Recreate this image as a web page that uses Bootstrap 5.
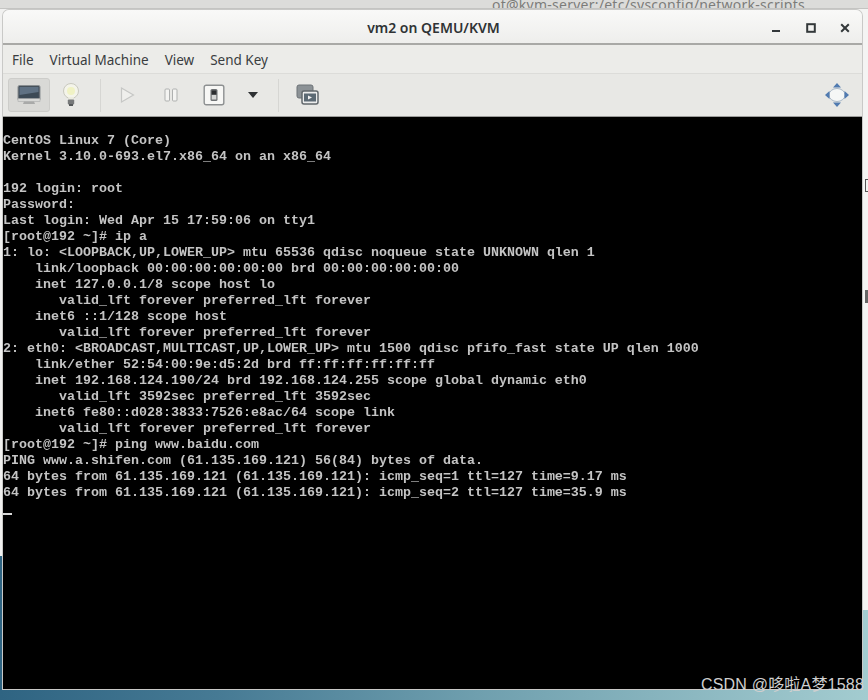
<!DOCTYPE html>
<html lang="en">
<head>
<meta charset="utf-8">
<title>vm2 on QEMU/KVM</title>
<link href="https://cdn.jsdelivr.net/npm/bootstrap@5.3.0/dist/css/bootstrap.min.css" rel="stylesheet">
<style>
html,body{height:100%;margin:0;overflow:hidden}
.desk{position:relative;width:868px;height:700px;overflow:hidden;background:linear-gradient(90deg,#2f6482 0,#467a94 25%,#6f9fae 55%,#a3ccd0 100%);font-family:"Liberation Sans",sans-serif}
.back-win{position:absolute;left:0;top:0;width:868px;height:556px;background:#f1f1f0}
.back-right{position:absolute;right:0;top:0;width:10px;height:610px;background:#f4f4f3}
.back-head{position:absolute;left:0;top:0;width:868px;height:9px;background:#dcdcda;border-bottom:1px solid #c4c4c2;overflow:hidden}
.back-title{position:absolute;left:492px;top:-5px;font:14px/19px "Noto Sans",sans-serif;color:#7c7c7a;white-space:nowrap;letter-spacing:.25px}
.tick-a{position:absolute;left:865px;top:179px;width:3px;height:13px;border:1px solid #555;border-right:0}
.tick-b{position:absolute;left:865px;top:290px;width:3px;height:13px;background:#666}
.vm-win{position:absolute;left:3px;top:10px;width:859px;height:679px;display:flex;flex-direction:column;border-radius:6px 6px 0 0;overflow:hidden;background:#e8e8e6;box-shadow:0 0 0 1px #c9c9c7}
.vm-title{height:35px;flex:none;background:linear-gradient(#f9f9f8,#eeeeec);border-bottom:2px solid #a9a9a6;font:600 14px "Noto Sans",sans-serif;color:#2f3335;position:relative;padding:1px 0 0 2px}
.win-btn{position:absolute;top:1px;height:33px;display:flex;align-items:center}
.btn-min{left:767px}.btn-max{left:802px}.btn-cls{left:836px}
.vm-menu{height:29px;flex:none;background:#ecece9;border-bottom:1px solid #dcdcd9;font:13.5px "Noto Sans",sans-serif;color:#3a3d3f;padding:2px 0 0 9px;gap:16px;align-items:center}
.vm-tools{height:43px;flex:none;background:#e8e8e5;align-items:center;padding-left:5px;position:relative;border-bottom:1px solid #9c9c9a}
.tool{width:42px;height:34px;display:flex;align-items:center;justify-content:center;flex:none}
.tool-on{background:#d9d9d6;border:1px solid #cdcdca;border-radius:3px}
.tool-sep{width:1px;height:33px;background:#d6d6d3;flex:none}
.sep-one{margin:0 5px 0 8px}.sep-two{margin:0 7px 0 6px}
.tool-pause{width:46px}.tool-box{width:40px}.tool-caret{width:38px}
.nav-icon{margin:0 12px 0 auto;display:flex}
.screen{flex:1 1 auto;background:#000;color:#c4c4c4;font:700 13.33px/16px "Liberation Mono",monospace;padding:16px 0 0 0;white-space:pre;filter:blur(.6px);margin:0;overflow:hidden}
.cur-bar{display:inline-block;width:9px;height:2px;background:#d8d8d8;vertical-align:-3px}
.wm-text{position:absolute;right:4px;bottom:5px;font:16px/20px "Liberation Sans","Noto Sans CJK SC",sans-serif;color:#cfcfcf;white-space:nowrap;letter-spacing:.2px}
</style>
</head>
<body>
<div class="desk">
  <div class="back-win"></div>
  <div class="back-right"></div>
  <div class="back-head"><span class="back-title">ot@kvm-server:/etc/sysconfig/network-scripts</span></div>
  <div class="tick-a"></div>
  <div class="tick-b"></div>
  <div class="vm-win">
    <div class="vm-title d-flex align-items-center justify-content-center">
      <span>vm2 on QEMU/KVM</span>
      <span class="win-btn btn-min"><svg width="12" height="12" viewBox="0 0 12 12"><rect x="2" y="8" width="8" height="2" fill="#33383a"/></svg></span>
      <span class="win-btn btn-max"><svg width="12" height="12" viewBox="0 0 12 12"><rect x="2.200" y="2.200" width="7.600" height="7.600" fill="none" stroke="#33383a" stroke-width="2"/></svg></span>
      <span class="win-btn btn-cls"><svg width="12" height="12" viewBox="0 0 12 12"><path d="M2.200 2.200 9.800 9.800M9.800 2.200 2.200 9.800" stroke="#33383a" stroke-width="2"/></svg></span>
    </div>
    <div class="vm-menu d-flex"><span>File</span><span>Virtual Machine</span><span>View</span><span>Send Key</span></div>
    <div class="vm-tools d-flex">
      <span class="tool tool-on"><svg width="26" height="24" viewBox="0 0 26 24"><rect x="2" y="2.500" width="22" height="15" rx="1.500" fill="#46515a" stroke="#8a8f92"/><rect x="3.500" y="4" width="19" height="12" fill="#3c4a56"/><path d="M3.500 4h19v5L3.500 12z" fill="#5f7183"/><rect x="2" y="15.500" width="22" height="3" fill="#d7d8d6" stroke="#a2a4a3" stroke-width=".5"/><path d="M8 18.500h10l1 2.500H7z" fill="#a9aaa9"/></svg></span>
      <span class="tool"><svg width="20" height="26" viewBox="0 0 20 26"><circle cx="10" cy="9" r="7.500" fill="#f4f4ea" stroke="#c9c9bf"/><circle cx="10" cy="9" r="4" fill="#f0f2c4"/><path d="M7 15l1 3h4l1-3z" fill="#ecece0"/><rect x="6.800" y="17.500" width="6.400" height="5" rx="1" fill="#77797a"/><rect x="8" y="22" width="4" height="2" fill="#55585a"/></svg></span>
      <span class="tool-sep sep-one"></span>
      <span class="tool"><svg width="18" height="18" viewBox="0 0 18 18"><path d="M3.500 2 15.500 9 3.500 16z" fill="#efefec" stroke="#c6c7c5" stroke-width="1.200"/></svg></span>
      <span class="tool tool-pause"><svg width="16" height="16" viewBox="0 0 16 16"><rect x="2" y="2" width="4.500" height="12" rx="1" fill="#f4f4f2" stroke="#afb1b0"/><rect x="9.500" y="2" width="4.500" height="12" rx="1" fill="#f4f4f2" stroke="#afb1b0"/></svg></span>
      <span class="tool tool-box"><svg width="22" height="22" viewBox="0 0 22 22"><rect x="1.200" y="1.200" width="19.600" height="19.600" rx="2" fill="#f7f7f5" stroke="#8d9091" stroke-width="1.400"/><rect x="7.500" y="5" width="7" height="12" rx="1.500" fill="#6f7274"/><rect x="8.700" y="6.500" width="4.600" height="4" fill="#2c2e30"/><rect x="8.700" y="11" width="4.600" height="4.500" fill="#d5d6d5"/></svg></span>
      <span class="tool tool-caret"><svg width="12" height="8" viewBox="0 0 12 8"><path d="M1 1h10L6 7z" fill="#2e3133"/></svg></span>
      <span class="tool-sep sep-two"></span>
      <span class="tool"><svg width="24" height="24" viewBox="0 0 24 24"><rect x="2" y="2" width="16" height="13" rx="2" fill="#8c9296" stroke="#6c7276"/><rect x="7" y="8" width="16" height="13" rx="2" fill="#eceded" stroke="#62686c" stroke-width="1.500"/><rect x="9" y="10.500" width="12" height="8" fill="#5c6a74"/><path d="M13 12.500l4 2-4 2z" fill="#f2f2f2"/></svg></span>
      <span class="nav-icon"><svg width="26" height="26" viewBox="0 0 26 26"><ellipse cx="13" cy="13" rx="8" ry="6.500" fill="#f5f7f6" stroke="#a9b8c8"/><path d="M13 1l4 4.500H9zM13 25l4-4.500H9zM1 13l4.500-4v8zM25 13l-4.500-4v8z" fill="#517bb0"/></svg></span>
    </div>
<pre class="screen">CentOS Linux 7 (Core)
Kernel 3.10.0-693.el7.x86_64 on an x86_64

192 login: root
Password:
Last login: Wed Apr 15 17:59:06 on tty1
[root@192 ~]# ip a
1: lo: &lt;LOOPBACK,UP,LOWER_UP&gt; mtu 65536 qdisc noqueue state UNKNOWN qlen 1
    link/loopback 00:00:00:00:00:00 brd 00:00:00:00:00:00
    inet 127.0.0.1/8 scope host lo
       valid_lft forever preferred_lft forever
    inet6 ::1/128 scope host
       valid_lft forever preferred_lft forever
2: eth0: &lt;BROADCAST,MULTICAST,UP,LOWER_UP&gt; mtu 1500 qdisc pfifo_fast state UP qlen 1000
    link/ether 52:54:00:9e:d5:2d brd ff:ff:ff:ff:ff:ff
    inet 192.168.124.190/24 brd 192.168.124.255 scope global dynamic eth0
       valid_lft 3592sec preferred_lft 3592sec
    inet6 fe80::d028:3833:7526:e8ac/64 scope link
       valid_lft forever preferred_lft forever
[root@192 ~]# ping www.baidu.com
PING www.a.shifen.com (61.135.169.121) 56(84) bytes of data.
64 bytes from 61.135.169.121 (61.135.169.121): icmp_seq=1 ttl=127 time=9.17 ms
64 bytes from 61.135.169.121 (61.135.169.121): icmp_seq=2 ttl=127 time=35.9 ms
<span class="cur-bar"></span></pre>
  </div>
  <div class="wm-text">CSDN @哆啦A梦1588</div>
</div>
<script src="https://cdn.jsdelivr.net/npm/bootstrap@5.3.0/dist/js/bootstrap.bundle.min.js"></script>
</body>
</html>
